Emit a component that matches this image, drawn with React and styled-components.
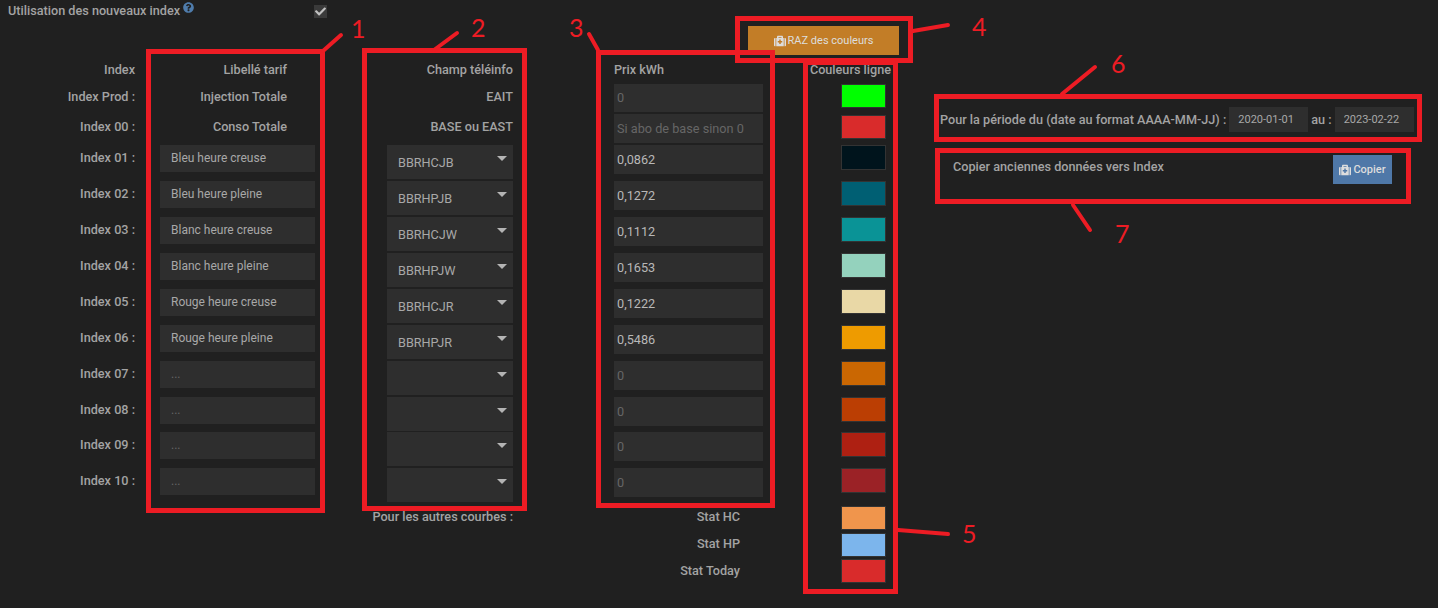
import { Fragment } from 'react';
import styled, { createGlobalStyle } from 'styled-components';
import { FaMedkit, FaQuestionCircle, FaCheck } from 'react-icons/fa';

const GlobalStyle = createGlobalStyle`
    html, body {
        margin: 0;
        height: 100%;
        background-color: #202020;
        overflow: hidden;
    }
    body {
        font-family: Roboto, "Liberation Sans", sans-serif;
        font-size: 12.66px;
        color: #a3a3a3;
    }
`;

const Page = styled.div`
    position: relative;
    width: 1438px;
    height: 608px;
    display: grid;
    grid-template-columns: 135px 252px 126px 250px 137px 1fr;
    grid-template-rows: 26px 34px 24px 30px 31px repeat(7, 36px) 35px 36px 37px 27px 26px 27px;
`;

const OptionRow = styled.div`
    grid-column: 1 / 4;
    grid-row: 1 / 3;
    display: flex;
    align-items: flex-start;
    padding: 4px 0 0 8px;
    font-weight: 500;
    line-height: 14px;
`;

const OptionLabel = styled.span`
    width: 306px;
    display: flex;
`;

const HelpIcon = styled(FaQuestionCircle)`
    width: 11px;
    height: 11px;
    margin: -2px 0 0 3px;
    color: #4f7cac;
`;

const CheckBox = styled.span`
    width: 13px;
    height: 13px;
    margin-top: 1px;
    background-color: #3a3a3a;
    color: #c0c0c0;
    display: flex;
    align-items: center;
    justify-content: center;
`;

const Text = styled.div`
    grid-column: ${({ $col }) => $col};
    padding: ${({ $top = 6 }) => $top}px ${({ $right = 0 }) => $right}px 0 0;
    text-align: right;
    font-weight: 500;
    line-height: 14px;
    white-space: nowrap;
`;

const TariffInput = styled.input`
    grid-column: 2;
    width: 155px;
    height: 27px;
    margin-left: 25px;
    padding: 0 0 1px 11px;
    box-sizing: border-box;
    border: 0;
    outline: 0;
    background-color: #2e2e2e;
    color: #a8a8a8;
    font: 12px Roboto, sans-serif;
    &::placeholder { color: #666; }
`;

const Select = styled.div`
    grid-column: 3;
    height: 34px;
    padding: 11px 6px 0 11px;
    box-sizing: border-box;
    display: flex;
    justify-content: space-between;
    background-color: #2e2e2e;
    color: #a8a8a8;
    line-height: 14px;
`;

const Arrow = styled.span`
    width: 0;
    height: 0;
    border-left: 5.5px solid transparent;
    border-right: 5.5px solid transparent;
    border-top: 5.5px solid #b4b4b4;
`;

const PriceInput = styled.input`
    grid-column: 4;
    width: 149px;
    height: ${({ $height = 29 }) => $height}px;
    margin-left: 101px;
    padding: 0 0 1px 3px;
    box-sizing: border-box;
    border: 0;
    outline: 0;
    background-color: #2e2e2e;
    color: #b8b8b8;
    font: 12.7px Roboto, sans-serif;
    &::placeholder { color: #666; }
`;

const Swatch = styled.div`
    grid-column: 5;
    width: 45px;
    height: ${({ $height = 25 }) => $height}px;
    margin: ${({ $top = 0 }) => $top}px 0 0 78px;
    box-sizing: border-box;
    border: 1px solid #333;
    background-color: ${({ $color }) => $color};
`;

const ActionButton = styled.div`
    height: 29px;
    display: flex;
    align-items: center;
    justify-content: center;
    gap: 2px;
    box-sizing: border-box;
    color: #ddd;
    font-size: 11px;
    line-height: 14px;
    background-color: ${({ $color }) => $color};
`;

const ResetButton = styled(ActionButton)`
    grid-column: 4 / 6;
    grid-row: 1 / 3;
    justify-self: end;
    width: 151px;
    margin: 26px 1px 0 0;
`;

const SidePanel = styled.div`
    grid-column: 6;
    grid-row: 1 / -1;
    padding: 107px 0 0 40px;
    display: flex;
    flex-direction: column;
    gap: 23px;
`;

const PeriodRow = styled.div`
    display: flex;
    align-items: center;
    gap: 3px;
    font-weight: 500;
    height: 25px;
`;

const DateInput = styled.input`
    width: 79px;
    height: 25px;
    box-sizing: border-box;
    border: 0;
    outline: 0;
    padding: 0 0 0 9px;
    background-color: #2e2e2e;
    color: #a8a8a8;
    font: 11px Roboto, sans-serif;
`;

const CopyRow = styled.div`
    width: 439px;
    padding-left: 13px;
    display: flex;
    justify-content: space-between;
    font-weight: 500;
    line-height: 14px;
`;

const CopyLabel = styled.span`
    padding-top: 5px;
`;

const CopyButton = styled(ActionButton)`
    width: 59px;
`;

const Overlay = styled.svg`
    position: absolute;
    top: 0;
    left: 0;
    pointer-events: none;
`;

const Mark = styled.span`
    position: absolute;
    left: ${({ $x }) => $x}px;
    top: ${({ $y }) => $y}px;
    color: #ed1c24;
    font: 400 25px/30px Lato, sans-serif;
`;

const rows = [
    { label: 'Index 01 :', tariff: 'Bleu heure creuse', field: 'BBRHCJB', price: '0,0862', color: '#00141c' },
    { label: 'Index 02 :', tariff: 'Bleu heure pleine', field: 'BBRHPJB', price: '0,1272', color: '#005f73' },
    { label: 'Index 03 :', tariff: 'Blanc heure creuse', field: 'BBRHCJW', price: '0,1112', color: '#0a9396' },
    { label: 'Index 04 :', tariff: 'Blanc heure pleine', field: 'BBRHPJW', price: '0,1653', color: '#94d2bd' },
    { label: 'Index 05 :', tariff: 'Rouge heure creuse', field: 'BBRHCJR', price: '0,1222', color: '#e9d8a6' },
    { label: 'Index 06 :', tariff: 'Rouge heure pleine', field: 'BBRHPJR', price: '0,5486', color: '#ee9b00' },
    { label: 'Index 07 :', color: '#ca6702' },
    { label: 'Index 08 :', color: '#bb3e03' },
    { label: 'Index 09 :', color: '#ae2012' },
    { label: 'Index 10 :', color: '#9b2226' },
];

const stats = [
    { label: 'Stat HP', color: '#7cb5ec', top: 5 },
    { label: 'Stat Today', color: '#d92b2b', top: 6 },
];

// outer edges of the red frames: x1, y1, x2, y2
const frames = [
    [146, 49, 325, 513],
    [362, 48, 527, 511],
    [596, 50, 775, 508],
    [735, 16, 913, 63],
    [803, 60, 898, 594],
    [934, 94, 1422, 142],
    [935, 148, 1411, 204],
];

const strokes = [
    [323, 51, 341, 35],
    [434, 50, 457, 33],
    [598, 50, 589, 34],
    [913, 31, 948, 25],
    [898, 530, 948, 534],
    [1062, 94, 1095, 67],
    [1073, 205, 1090, 230],
];

const marks = [
    { n: 1, x: 351, y: 13 },
    { n: 2, x: 471, y: 12 },
    { n: 3, x: 569, y: 12 },
    { n: 4, x: 972, y: 11 },
    { n: 5, x: 962, y: 518 },
    { n: 6, x: 1111, y: 48 },
    { n: 7, x: 1115, y: 218 },
];

const App = () => (
    <>
        <GlobalStyle />
        <Page>
            <OptionRow>
                <OptionLabel>
                    Utilisation des nouveaux index
                    <HelpIcon />
                </OptionLabel>
                <CheckBox><FaCheck size={11} /></CheckBox>
            </OptionRow>
            <ResetButton $color="#c27d27"><FaMedkit size={12} /> RAZ des couleurs</ResetButton>

            <Text $col={1} $top={3}>Index</Text>
            <Text $col={2} $top={3} $right={100}>Libellé tarif</Text>
            <Text $col={3} $top={3}>Champ téléinfo</Text>
            <Text $col={4} $top={3} $right={99}>Prix kWh</Text>
            <Text $col={5} $top={3} $right={9}>Couleurs ligne</Text>

            <Text $col={1}>Index Prod :</Text>
            <Text $col={2} $right={100}>Injection Totale</Text>
            <Text $col={3}>EAIT</Text>
            <PriceInput readOnly placeholder="0" $height={28} />
            <Swatch $color="#00ff00" $height={24} />

            <Text $col={1}>Index 00 :</Text>
            <Text $col={2} $right={100}>Conso Totale</Text>
            <Text $col={3}>BASE ou EAST</Text>
            <PriceInput readOnly placeholder="Si abo de base sinon 0" />
            <Swatch $color="#d92b2b" $top={1} $height={24} />

            {rows.map((row) => (
                <Fragment key={row.label}>
                    <Text $col={1}>{row.label}</Text>
                    <TariffInput readOnly defaultValue={row.tariff} placeholder="..." />
                    <Select>
                        <span>{row.field}</span>
                        <Arrow />
                    </Select>
                    <PriceInput readOnly defaultValue={row.price} placeholder="0" />
                    <Swatch $color={row.color} />
                </Fragment>
            ))}

            <Text $col="2 / 4" $top={5}>Pour les autres courbes :</Text>
            <Text $col={4} $right={23} $top={5}>Stat HC</Text>
            <Swatch $color="#f0954c" $top={1} $height={24} />
            {stats.map((stat) => (
                <Fragment key={stat.label}>
                    <Text $col={4} $right={23} $top={stat.top}>{stat.label}</Text>
                    <Swatch $color={stat.color} $top={1} $height={24} />
                </Fragment>
            ))}

            <SidePanel>
                <PeriodRow>
                    Pour la période du (date au format AAAA-MM-JJ) :
                    <DateInput readOnly defaultValue="2020-01-01" />
                    au :
                    <DateInput readOnly defaultValue="2023-02-22" />
                </PeriodRow>
                <CopyRow>
                    <CopyLabel>Copier anciennes données vers Index</CopyLabel>
                    <CopyButton $color="#4f78a8"><FaMedkit size={12} /> Copier</CopyButton>
                </CopyRow>
            </SidePanel>

            <Overlay width="1438" height="608" fill="none" stroke="#ed1c24" strokeWidth="5">
                {frames.map(([x1, y1, x2, y2]) => (
                    <rect key={`${x1}-${y1}`} x={x1 + 2.5} y={y1 + 2.5} width={x2 - x1 - 5} height={y2 - y1 - 5} />
                ))}
                {strokes.map(([x1, y1, x2, y2]) => (
                    <line key={`${x1}-${y1}`} x1={x1} y1={y1} x2={x2} y2={y2} strokeWidth="4" strokeLinecap="round" />
                ))}
            </Overlay>
            {marks.map((mark) => (
                <Mark key={mark.n} $x={mark.x} $y={mark.y}>{mark.n}</Mark>
            ))}
        </Page>
    </>
);

export default App;
